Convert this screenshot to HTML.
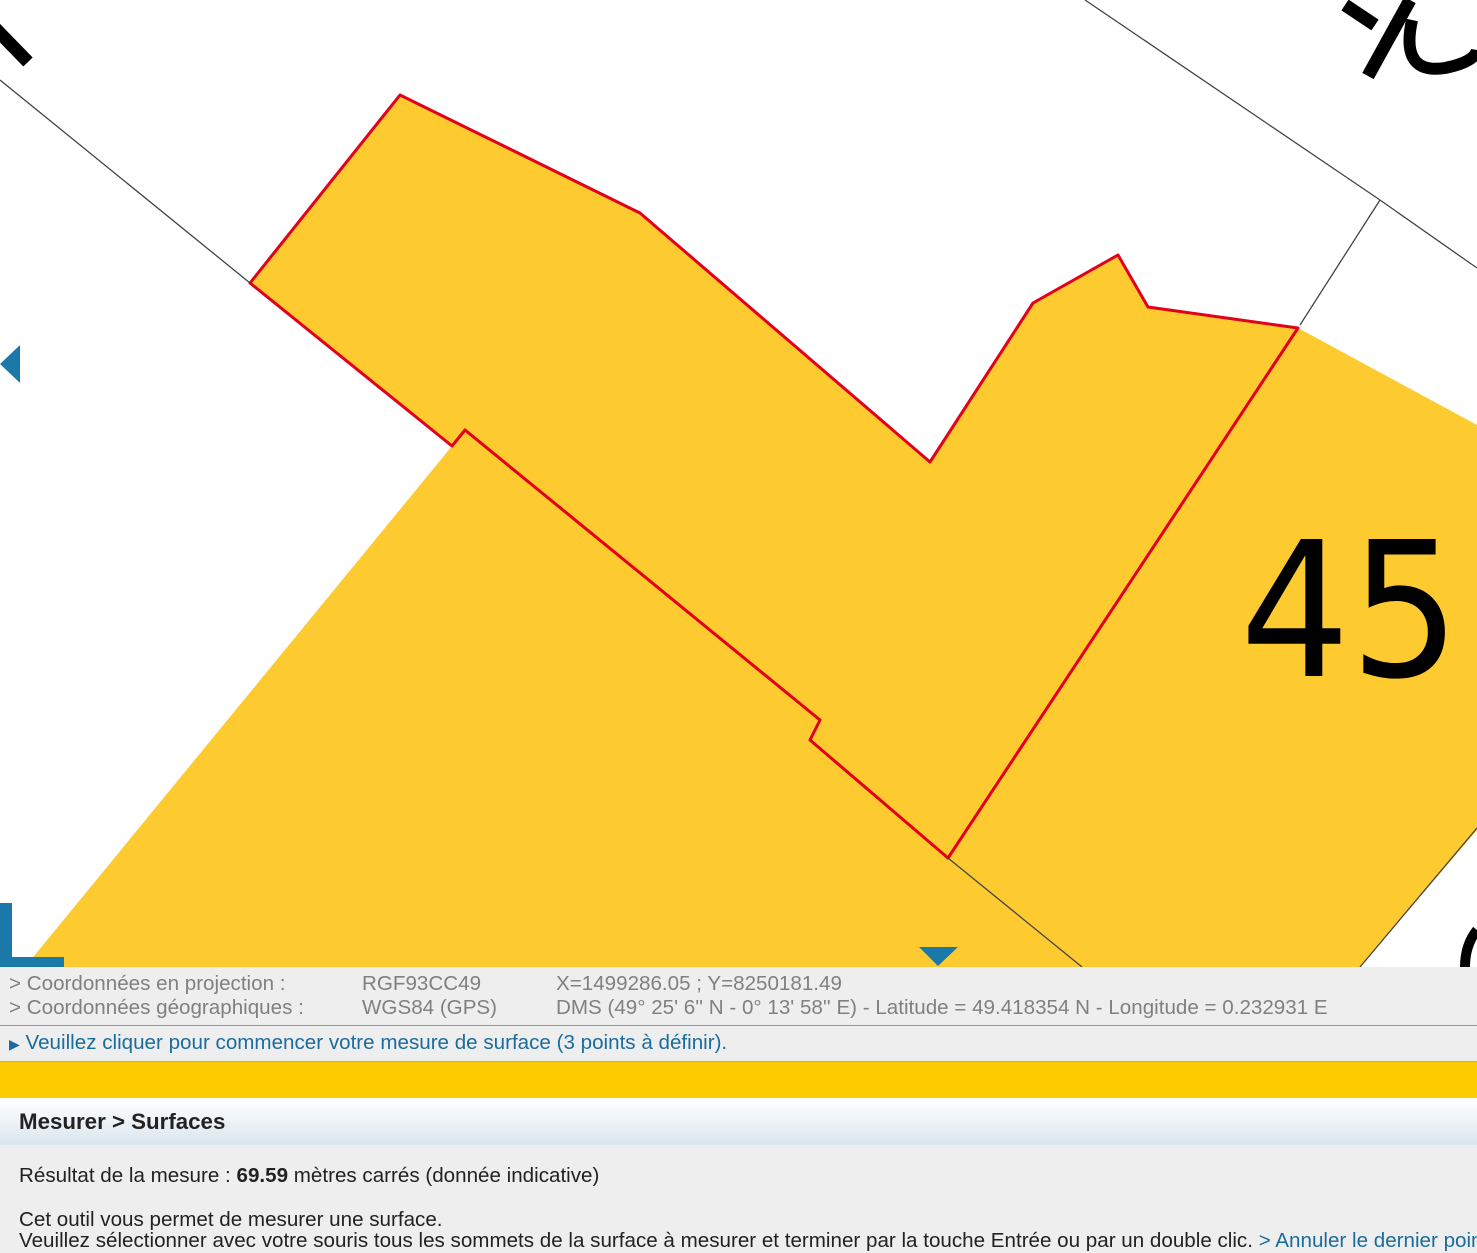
<!DOCTYPE html>
<html><head><meta charset="utf-8"><style>
body{margin:0;width:1477px;height:1241px;overflow:hidden;background:#eee;font-family:"Liberation Sans",sans-serif;position:relative}
.map{position:absolute;left:0;top:0}
.t{position:absolute;white-space:nowrap;font-size:20.6px}
.g{color:#808080}
</style></head><body>
<svg class="map" width="1477" height="967" viewBox="0 0 1477 967">
<rect width="1477" height="967" fill="#fff"/>
<polygon points="25,967 452,446 465,430 820,720 810,740 948,858 1298,328 1477,425 1477,830 1360,967" fill="#fdca30"/>
<polygon points="400,95 640,213 930,462 1033,303 1118,255 1148,307 1298,328 948,858 810,740 820,720 465,430 452,446 250,283" fill="#fdca30" stroke="#e3001b" stroke-width="3" stroke-linejoin="round"/>
<g stroke="#444" stroke-width="1.3" fill="none">
<line x1="0" y1="80" x2="250" y2="283"/>
<line x1="948" y1="858" x2="1082" y2="967"/>
<line x1="1085" y1="0" x2="1380" y2="200"/>
<line x1="1380" y1="200" x2="1477" y2="268"/>
<line x1="1380" y1="200" x2="1300" y2="325"/>
<line x1="1477" y1="828" x2="1360" y2="967"/>
</g>
<line x1="-5" y1="28" x2="28" y2="62" stroke="#000" stroke-width="13"/>
<line x1="1345" y1="5" x2="1375" y2="25" stroke="#000" stroke-width="13"/>
<line x1="1410" y1="0" x2="1368" y2="76" stroke="#000" stroke-width="13"/>
<path d="M1412 20 Q1400 75 1445 68 Q1475 62 1477 50" stroke="#000" stroke-width="12" fill="none"/>
<path d="M1477 930 Q1465 945 1465 967" stroke="#000" stroke-width="10" fill="none"/>
<text x="1240" y="676" font-family="DejaVu Sans, sans-serif" font-size="188" fill="#000" textLength="220" lengthAdjust="spacingAndGlyphs">45</text>
<polygon points="0,364 20,345 20,383" fill="#1a79a8"/>
<polygon points="919,947 958,947 938,966" fill="#1a79a8"/>
<rect x="0" y="903" width="12" height="64" fill="#1a79a8"/>
<rect x="0" y="957" width="64" height="10" fill="#1a79a8"/>
</svg>
<div class="t g" style="left:9px;top:972px">&gt; Coordonnées en projection :</div>
<div class="t g" style="left:362px;top:972px">RGF93CC49</div>
<div class="t g" style="left:556px;top:972px">X=1499286.05 ; Y=8250181.49</div>
<div class="t g" style="left:9px;top:996px">&gt; Coordonnées géographiques :</div>
<div class="t g" style="left:362px;top:996px">WGS84 (GPS)</div>
<div class="t g" style="left:556px;top:996px">DMS (49° 25' 6'' N - 0° 13' 58'' E) - Latitude = 49.418354 N - Longitude = 0.232931 E</div>
<div style="position:absolute;left:0;top:1025px;width:1477px;height:1px;background:#999"></div>
<div class="t" style="left:9px;top:1031px;color:#1a6c9c"><span style="font-size:14px">&#9654;</span> Veuillez cliquer pour commencer votre mesure de surface (3 points à définir).</div>
<div style="position:absolute;left:0;top:1061px;width:1477px;height:1px;background:#aaa"></div>
<div style="position:absolute;left:0;top:1062px;width:1477px;height:36px;background:#fc0"></div>
<div style="position:absolute;left:0;top:1098px;width:1477px;height:47px;background:linear-gradient(#fff,#d9e6ee)"></div>
<div class="t" style="left:19px;top:1109px;font-size:22.3px;font-weight:bold;color:#222">Mesurer &gt; Surfaces</div>
<div class="t" style="left:19px;top:1164px;color:#222">Résultat de la mesure : <b>69.59</b> mètres carrés (donnée indicative)</div>
<div class="t" style="left:19px;top:1208px;color:#222">Cet outil vous permet de mesurer une surface.</div>
<div class="t" style="left:19px;top:1229px;color:#222">Veuillez sélectionner avec votre souris tous les sommets de la surface à mesurer et terminer par la touche Entrée ou par un double clic. <span style="color:#1a6c9c">&gt; Annuler le dernier point</span></div>
</body></html>
